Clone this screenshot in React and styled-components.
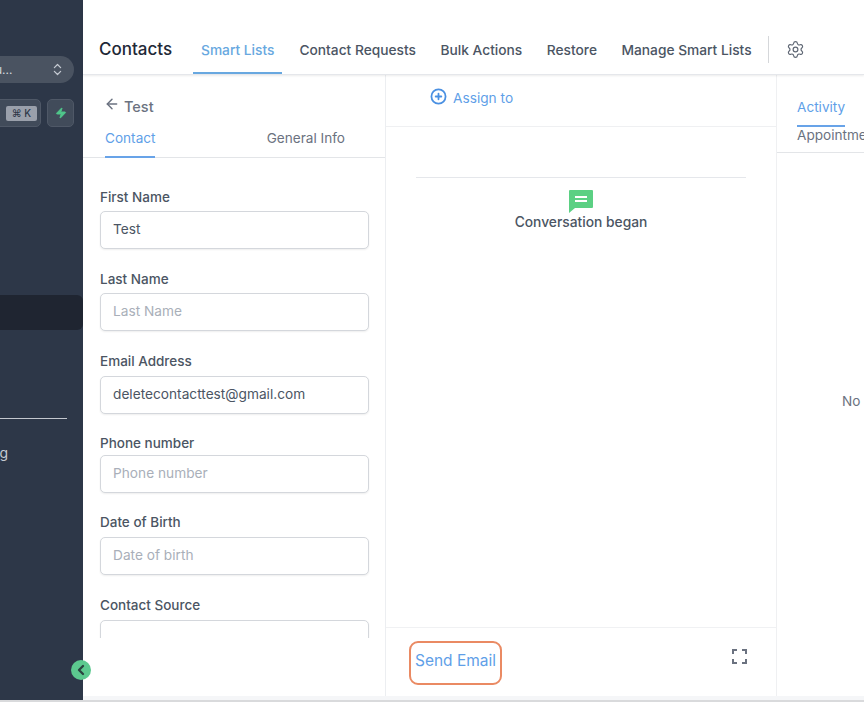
import styled, { createGlobalStyle } from "styled-components";
import { ArrowLeft, ChevronLeft, ChevronsUpDown, CirclePlus, Settings, Zap } from "lucide-react";

const GlobalStyle = createGlobalStyle`
    html, body {
        margin: 0;
        padding: 0;
        background: #fff;
        font-family: Inter, "Noto Sans", sans-serif;
        overflow: hidden;
    }
    * { box-sizing: border-box; }
`;

/* Whole window */
const Shell = styled.div`
    position: relative;
    display: flex;
    width: 864px;
    height: 702px;
    overflow: hidden;
    border-bottom: 2px solid #d9dadc;
`;

/* Dark navigation, cut off on the left */
const Sidebar = styled.aside`
    flex: 0 0 83px;
    padding-top: 56px;
    overflow: hidden;
    background: #2d3748;
`;

const AccountPill = styled.div`
    display: flex;
    align-items: center;
    justify-content: space-between;
    width: 100px;
    height: 27px;
    margin-left: -26px;
    padding: 0 9px 0 21px;
    border-radius: 14px;
    background: #4a5361;
    color: #d5d9df;
    font-size: 12px;
    svg { color: #c5cad2; }
`;

const SearchRow = styled.div`
    display: flex;
    gap: 6px;
    margin: 16px 0 0 -40px;
    width: 114px;
`;

const SearchButton = styled.div`
    display: flex;
    align-items: center;
    justify-content: flex-end;
    flex: 1;
    height: 28px;
    padding-right: 3px;
    border: 1px solid #4f5867;
    border-radius: 5px;
    background: #414b5a;
`;

const Kbd = styled.span`
    display: flex;
    align-items: center;
    justify-content: center;
    width: 31px;
    height: 15px;
    border-radius: 2px;
    background: #9aa0ab;
    color: #2d3748;
    font-size: 10px;
    font-weight: 500;
`;

const BoltButton = styled.div`
    display: flex;
    align-items: center;
    justify-content: center;
    flex: 0 0 27px;
    height: 28px;
    border: 1px solid #4f5867;
    border-radius: 5px;
    background: #414b5a;
    color: #4fc58a;
`;

const ActiveRow = styled.div`
    height: 35px;
    margin-top: 168px;
    border-radius: 0 6px 6px 0;
    background: #1f2531;
`;

const SidebarRule = styled.div`
    width: 67px;
    height: 1px;
    margin-top: 88px;
    background: #c3c7ce;
`;

const SidebarText = styled.div`
    margin: 25px 0 0 -62px;
    width: 70px;
    color: #c5cad2;
    font-size: 14px;
    text-align: right;
    line-height: 18px;
`;

const CollapseButton = styled.div`
    position: absolute;
    left: 71px;
    top: 660px;
    display: flex;
    align-items: center;
    justify-content: center;
    width: 20px;
    height: 20px;
    border-radius: 50%;
    background: #5cc98f;
    color: #2a4440;
`;

const Main = styled.main`
    display: flex;
    flex-direction: column;
    flex: 1;
    min-width: 0;
    padding-bottom: 4px;
    background: #f5f6f8;
`;

/* Top header with tabs */
const Header = styled.header`
    position: relative;
    display: flex;
    align-items: flex-end;
    flex: 0 0 75px;
    padding-left: 16px;
    background: #fff;
    border-bottom: 1px solid #e5e7eb;
    box-shadow: 0 1px 2px rgba(0, 0, 0, 0.08);
`;

const PageTitle = styled.h1`
    width: 94px;
    margin: 0 0 14px;
    color: #1f2937;
    font-size: 17px;
    font-weight: 500;
    line-height: 22px;
    white-space: nowrap;
`;

const NavTabs = styled.nav`
    display: flex;
    align-items: flex-end;
`;

const NavTab = styled.div`
    height: 38px;
    padding: 4px ${(props) => (props.$active ? "8px" : "0")} 0;
    margin-right: ${(props) => (props.$active ? "17px" : "24.5px")};
    color: ${(props) => (props.$active ? "#68a8e0" : "#4b5563")};
    border-bottom: ${(props) => (props.$active ? "2px solid #68a8e0" : "none")};
    font-size: 13.75px;
    font-weight: 500;
    line-height: 20px;
    white-space: nowrap;
`;

const HeaderRule = styled.div`
    width: 1px;
    height: 27px;
    margin: 0 17px 11px -8px;
    background: #d5d7da;
`;

const GearSlot = styled.div`
    height: 38px;
    padding-top: 4px;
    color: #5f6774;
    svg { display: block; }
`;

/* The three panes under the header */
const Panes = styled.div`
    display: flex;
    flex: 1;
    min-height: 0;
`;

const ContactPane = styled.section`
    display: flex;
    flex-direction: column;
    flex: 0 0 303px;
    background: #fff;
    border-right: 1px solid #eceef1;
`;

const BackRow = styled.div`
    display: flex;
    align-items: center;
    gap: 4px;
    height: 30px;
    margin-top: 16px;
    padding-left: 21px;
    color: #6b7280;
    font-size: 14.5px;
    font-weight: 500;
    svg { margin-top: -5px; }
`;

const SideTabs = styled.div`
    display: flex;
    justify-content: space-between;
    height: 37px;
    padding: 8px 40px 0 22px;
    border-bottom: 1px solid #e3e5e8;
`;

const SideTab = styled.div`
    height: 29px;
    color: ${(props) => (props.$active ? "#5f9fe8" : "#6b7280")};
    border-bottom: ${(props) => (props.$active ? "2px solid #68a3e8" : "none")};
    font-size: 13.6px;
    line-height: 18px;
`;

const FormScroll = styled.div`
    flex: 0 0 480px;
    padding: 30px 16px 0 17px;
    overflow: hidden;
`;

const Field = styled.div`
    margin-bottom: ${(props) => props.$gap}px;
`;

const Label = styled.label`
    display: block;
    margin-bottom: ${(props) => props.$gap || 5}px;
    color: #4b5563;
    font-size: 13.5px;
    font-weight: 500;
    line-height: 18px;
`;

const Input = styled.div`
    height: 38px;
    padding-left: 12px;
    border: 1px solid #d4d7dc;
    border-radius: 5px;
    box-shadow: 0 1px 2px rgba(0, 0, 0, 0.07);
    color: ${(props) => (props.$empty ? "#a9afb9" : "#4b5563")};
    font-size: 13.7px;
    line-height: 34px;
    background: #fff;
`;

const ConversationPane = styled.section`
    display: flex;
    flex-direction: column;
    flex: 0 0 391px;
    background: #fff;
    border-right: 1px solid #eff0f2;
`;

const AssignBar = styled.div`
    display: flex;
    align-items: center;
    gap: 6px;
    flex: 0 0 52px;
    padding: 0 0 6px 44px;
    border-bottom: 1px solid #eff0f2;
    color: #5f9fe8;
    font-size: 13.7px;
    svg { color: #4a90e2; margin-top: -2px; }
`;

const Thread = styled.div`
    display: flex;
    flex-direction: column;
    align-items: center;
    flex: 1;
    padding: 50px 30px 0;
`;

const ThreadRule = styled.div`
    align-self: stretch;
    height: 1px;
    background: #e5e7eb;
`;

const ChatIcon = styled.svg`
    display: block;
    width: 24px;
    height: 23px;
    margin-top: 12px;
`;

const Began = styled.div`
    margin-top: -1px;
    color: #4b5563;
    font-size: 13.8px;
    font-weight: 500;
    line-height: 20px;
`;

const Composer = styled.div`
    display: flex;
    align-items: flex-start;
    justify-content: space-between;
    flex: 0 0 69px;
    padding: 13px 29px 0 23px;
    border-top: 1px solid #f0f1f3;
`;

const SendButton = styled.div`
    width: 93px;
    height: 44px;
    border: 2px solid #ea8a63;
    border-radius: 9px;
    color: #5f9fe8;
    font-size: 15.5px;
    line-height: 36px;
    text-align: center;
`;

const ExpandIcon = styled.svg`
    display: block;
    width: 15px;
    height: 15px;
    margin-top: 8px;
    fill: none;
    stroke: #6b7280;
    stroke-width: 2;
`;

const ActivityPane = styled.section`
    display: flex;
    flex-direction: column;
    flex: 1;
    min-width: 0;
    background: #fff;
    overflow: hidden;
`;

const ActivityTabs = styled.div`
    flex: 0 0 78px;
    padding: 23px 0 0 20px;
    border-bottom: 1px solid #e3e5e8;
`;

const ActivityTab = styled.div`
    width: 48px;
    height: 29px;
    color: #5f9fe8;
    border-bottom: 2px solid #68a3e8;
    font-size: 13.6px;
    line-height: 18px;
`;

const AppointmentTab = styled.div`
    color: #6b7280;
    font-size: 13.6px;
    line-height: 17px;
    white-space: nowrap;
`;

const Empty = styled.div`
    padding: 239px 0 0 65px;
    color: #6b7280;
    font-size: 13.6px;
    line-height: 18px;
`;

const fields = [
    { label: "First Name", value: "Test", gap: 21 },
    { label: "Last Name", placeholder: "Last Name", gap: 21 },
    { label: "Email Address", value: "deletecontacttest@gmail.com", labelGap: 6, gap: 20 },
    { label: "Phone number", placeholder: "Phone number", labelGap: 3, gap: 20 },
    { label: "Date of Birth", placeholder: "Date of birth", labelGap: 6, gap: 21 },
    { label: "Contact Source", placeholder: "\u00a0", labelGap: 6, gap: 0 },
];

const tabs = ["Contact Requests", "Bulk Actions", "Restore", "Manage Smart Lists"];

const App = () => {
    return (
        <Shell>
            <GlobalStyle />
            <Sidebar>
                <AccountPill>
                    <span>u...</span>
                    <ChevronsUpDown size={15} />
                </AccountPill>
                <SearchRow>
                    <SearchButton><Kbd>⌘ K</Kbd></SearchButton>
                    <BoltButton><Zap size={12} fill="currentColor" /></BoltButton>
                </SearchRow>
                <ActiveRow />
                <SidebarRule />
                <SidebarText>Marketing</SidebarText>
            </Sidebar>
            <CollapseButton><ChevronLeft size={16} strokeWidth={3.5} /></CollapseButton>
            <Main>
                <Header>
                    <PageTitle>Contacts</PageTitle>
                    <NavTabs>
                        <NavTab $active>Smart Lists</NavTab>
                        {tabs.map((tab) => <NavTab key={tab}>{tab}</NavTab>)}
                        <HeaderRule />
                        <GearSlot><Settings size={19} strokeWidth={1.5} /></GearSlot>
                    </NavTabs>
                </Header>
                <Panes>
                    <ContactPane>
                        <BackRow><ArrowLeft size={16} strokeWidth={2.2} />Test</BackRow>
                        <SideTabs>
                            <SideTab $active>Contact</SideTab>
                            <SideTab>General Info</SideTab>
                        </SideTabs>
                        <FormScroll>
                            {fields.map((field) => (
                                <Field key={field.label} $gap={field.gap}>
                                    <Label $gap={field.labelGap}>{field.label}</Label>
                                    <Input $empty={!field.value}>{field.value || field.placeholder}</Input>
                                </Field>
                            ))}
                        </FormScroll>
                    </ContactPane>
                    <ConversationPane>
                        <AssignBar><CirclePlus size={17} strokeWidth={2.5} />Assign to</AssignBar>
                        <Thread>
                            <ThreadRule />
                            <ChatIcon viewBox="0 0 24 23">
                                <path fill="#5bd083" d="M1 0h22a1 1 0 0 1 1 1v16a1 1 0 0 1-1 1H6l-6 5V1a1 1 0 0 1 1-1z" />
                                <path fill="#fff" d="M6 6h12v2H6zM6 10h12v2H6z" />
                            </ChatIcon>
                            <Began>Conversation began</Began>
                        </Thread>
                        <Composer>
                            <SendButton>Send Email</SendButton>
                            <ExpandIcon viewBox="0 0 15 15">
                                <path d="M1 5V1h4M10 1h4v4M14 10v4h-4M5 14H1v-4" />
                            </ExpandIcon>
                        </Composer>
                    </ConversationPane>
                    <ActivityPane>
                        <ActivityTabs>
                            <ActivityTab>Activity</ActivityTab>
                            <AppointmentTab>Appointments</AppointmentTab>
                        </ActivityTabs>
                        <Empty>No</Empty>
                    </ActivityPane>
                </Panes>
            </Main>
        </Shell>
    );
};

export default App;
